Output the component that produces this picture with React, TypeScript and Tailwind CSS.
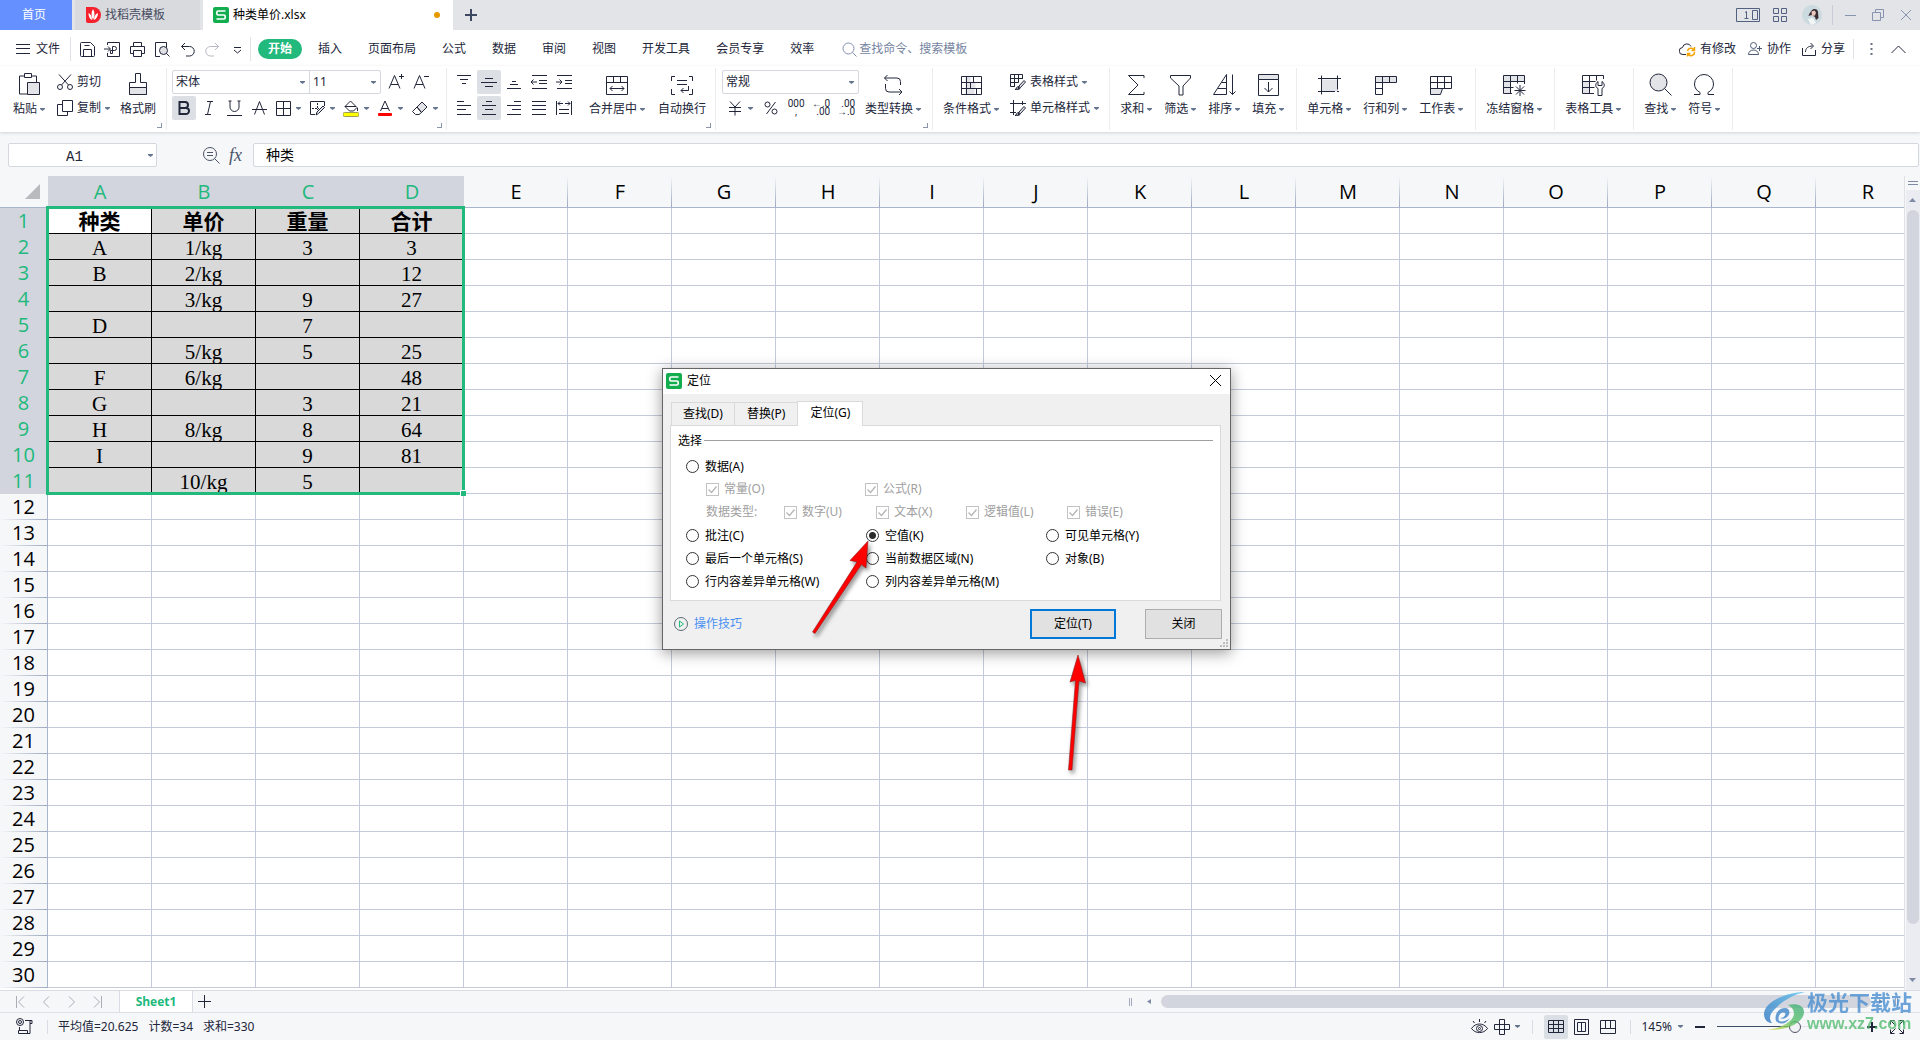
import React, { useState } from 'react'
import clsx from 'clsx'

type IconProps = {
  w?: number
  h?: number
  sw?: number
  className?: string
  children: React.ReactNode
}

function Icon({ w = 24, h = 24, sw = 1, className, children }: IconProps) {
  return (
    <svg width={w} height={h} viewBox={`0 0 ${w} ${h}`} fill="none" stroke="currentColor" strokeWidth={sw} className={clsx('shrink-0', className)} aria-hidden="true">
      {children}
    </svg>
  )
}

const Caret = ({ className }: { className?: string }) => (
  <svg width="5" height="3" viewBox="0 0 5 3" className={clsx('shrink-0 fill-[#66758f]', className)} aria-hidden="true">
    <path d="M0 0h5v1L2.5 3 0 1z" />
  </svg>
)

const WpsLogo = () => (
  <svg width="16" height="16" viewBox="0 0 16 16" className="shrink-0" aria-hidden="true">
    <rect width="16" height="16" rx="2" fill="#12ad4e" />
    <path d="M12.5 4H5.2a1.4 1.4 0 0 0-1.4 1.4v1.2A1.4 1.4 0 0 0 5.200 8h5.600a1.400 1.400 0 0 1 1.400 1.400v1.200a1.400 1.400 0 0 1-1.400 1.400H3.500" fill="none" stroke="#fff" strokeWidth="1.7" />
  </svg>
)

/* ---------- icons of the quick bar ---------- */

const quickIcons = [
  { name: '保存', d: <><path d="M1.500 2.500a1 1 0 0 1 1-1h9l4 4v9a1 1 0 0 1-1 1h-12a1 1 0 0 1-1-1z" /><path d="M4.500 15.500v-7h8v7M5.500 4.500h5" /></> },
  { name: '输出为PDF', d: <><path d="M3.500 4V1.500h12v14h-12V12M0 8h6M4 5.500 6.500 8 4 10.500M8.500 12.500v-7h2a2 2 0 0 1 0 4h-4M8.500 12.500H6.500v-3" /></> },
  { name: '打印', d: <><path d="M4.500 5.500v-4h8v4M4.500 12.500h-3v-7h14v7h-3" /><path d="M4.500 9.500h8v6h-8z" /></> },
  { name: '打印预览', d: <><path d="M6 15.500H1.500v-14h11v5" /><circle cx="9.500" cy="9.500" r="4" fill="#dfe1e5" /><path d="m12.500 12.500 3 3" /></> },
  { name: '撤消', d: <path d="M6 2 2.500 5.500 6 9M2.500 5.500h8a4.500 4.500 0 0 1 0 9.500H7" /> },
]

/* ---------- icons of the ribbon ---------- */

const icons = {
  paste: <Icon><path d="M7 4H2.500v18h8M15 4h4.500v6" /><path d="M7.500 1.500h7v4h-7z" /><path d="M10.500 10.500h12v12h-12z" fill="#e2e4e8" /></Icon>,
  brush: <Icon><path d="M9.500 1.500h5v9h6v12h-17v-12h6z" /><path d="M3.500 15.500h17v7h-17z" fill="#e2e4e8" /></Icon>,
  merge: <Icon><path d="M1.500 4.500h21v18h-21zM1.500 10.500h21M8.500 4.500v6M15.500 4.500v6M5 16.500h14M7.500 14 5 16.500 7.500 19M16.500 14l2.500 2.500-2.500 2.500" /></Icon>,
  wrap: <Icon><path d="M5 4.500H1.500V9M1.500 17v5.500H5M19 4.500h3.500V9M22.500 17v5.500H19M7 8.500h10M7 12.500h10M18.500 14v4.500H11M13.500 16 11 18.500l2.500 2.500" /></Icon>,
  convert: <Icon><path d="M6.500 3 3.500 6l3 3M3.500 6H16a3.500 3.500 0 0 1 3.500 3.500V13M4.500 12v4.500A3.500 3.500 0 0 0 8 20h13M18 17l3 3-3 3" /></Icon>,
  cond: <Icon><path d="M6.500 4.500h5v6h-5zM6.500 10.500h4v6h-4zM10.500 10.500h6v6h-6zM6.500 16.500h9v6h-9z" fill="#e2e4e8" stroke="none" /><path d="M2.500 4.500h20v18h-20zM2.500 10.500h20M2.500 16.500h20M7.500 4.500v18M14.500 4.500v6M11.500 10.500v6M17.500 16.500v6" /></Icon>,
  sum: <Icon><path d="M20 6V3.500H4.500l9.500 9.500-9.500 9.500H20V20" /></Icon>,
  filter: <Icon><path d="M2.500 3.500h20v2.500l-7.500 8v9h-4v-9l-8.500-8z" /></Icon>,
  sort: <Icon><path d="M1.500 22.500 14.500 2.500v20zM6 16.500h8.500M9.500 10.500h5M20.500 2.500v20M17.500 19.500l3 3 3-3" /></Icon>,
  fill: <Icon><path d="M2.500 2.500h20v5h-20z" fill="#e2e4e8" /><path d="M2.500 7.500v16h20v-16M12.500 10v10M8.500 16l4 4 4-4" /></Icon>,
  cells: <Icon><path d="M4.500 7.500h16v12h-16z" fill="#e2e4e8" stroke="none" /><path d="M4.500 3.500v19M20.500 3.500v14M1 6.500h23M1 19.500h17M20 19.500h2" /></Icon>,
  rowcol: <Icon><path d="M2.500 4.500h21v6h-21z" fill="#e2e4e8" /><path d="M9.500 4.500v18h-7v-18M16.500 4.500v6M2.500 10.500h7M2.500 16.500h7" /></Icon>,
  sheet: <Icon><path d="M1.500 16.500h12l-2 6h-10z" fill="#e2e4e8" /><path d="M1.500 4.500h21v12h-21zM1.500 10.500h21M8.500 4.500v12M15.500 4.500v12" /></Icon>,
  freeze: <Icon><path d="M1.500 3.500h21v6h-14v12h-7z" fill="#e2e4e8" stroke="none" /><path d="M10 21.500H1.500v-18h21v6h-21M1.500 15.500h10M8.500 3.500v18M15.500 3.500v8M22.500 9v3M18 13v11M12.500 18.500h11M14 14.500l8 8M22 14.500l-8 8" /></Icon>,
  tools: <Icon><path d="M1.500 9.500h7v12h-7z" fill="#e2e4e8" stroke="none" /><path d="M13 21.500H1.500v-18h21V7M1.500 9.500h13M1.500 15.500h12M8.500 3.500v18M15.500 3.500v5" /><path d="M17 9.500c-3 2-3 5.500 0 7V23.500h4v-7c3-1.500 3-5 0-7v4h-4z" fill="#fff" /></Icon>,
  find: <Icon><circle cx="10.500" cy="10.500" r="8.500" fill="#e2e4e8" /><path d="m16.500 16.500 7 7" /></Icon>,
  omega: <Icon><path d="M2 22.500h6v-2C4.500 18.500 2.500 16 2.500 12a9.500 9.500 0 0 1 19 0c0 4-2 6.500-5.500 8.500v2h6" /></Icon>,
}

const cutIcon = <Icon w={16} h={16}><path d="M2 .5 11.500 11M14 .5 4.500 11" /><circle cx="3" cy="13" r="2.500" /><circle cx="13" cy="13" r="2.500" /></Icon>
const copyIcon = <Icon w={16} h={16}><path d="M5 4.500H.5v11h10V12" /><path d="M5.500.5h10v11h-10z" /></Icon>
const penPath = <path d="m8 15 1-3 5-5.500 1.500 1.500-5 5.500z" fill="#e2e4e8" />
const tableStyleIcon = <Icon w={16} h={16}><path d="M5 12.500H.5v-12h12V5M.5 4.500h12M.5 8.500h8M4.500.5v12M8.500.5v8" />{penPath}<path d="M5 15.500c2 0 1-3 3.500-3 1 0 2 1 1.500 2-1 1-2.500 1-5 1z" /></Icon>
const cellStyleIcon = <Icon w={16} h={16}><path d="M3.500 0v15M0 3.500h16M12.500 1v4M0 12.500h6" />{penPath}<path d="M5 15.500c2 0 1-3 3.500-3 1 0 2 1 1.500 2-1 1-2.500 1-5 1z" /></Icon>

function BigButton({ icon, label, caret = true }: { icon: React.ReactNode; label: string; caret?: boolean }) {
  return (
    <button className="flex flex-col items-center gap-[5px] pt-0.5">
      {icon}
      <span className="flex h-4 items-center gap-[3px] whitespace-nowrap">
        {label}
        {caret && <Caret />}
      </span>
    </button>
  )
}

function SmallButton({ icon, label, caret = true }: { icon: React.ReactNode; label: string; caret?: boolean }) {
  return (
    <button className="flex h-6 items-center gap-1 whitespace-nowrap">
      {icon}
      <span className="flex items-center gap-1">
        {label}
        {caret && <Caret />}
      </span>
    </button>
  )
}

function ToolButton({ label, active, children }: { label: string; active?: boolean; children: React.ReactNode }) {
  return (
    <button aria-label={label} className={clsx('flex size-6 shrink-0 items-center justify-center rounded-xs', active && 'bg-[#dce0e5]')}>
      {children}
    </button>
  )
}

function SplitButton({ label, children }: { label: string; children: React.ReactNode }) {
  return (
    <button aria-label={label} className="flex h-6 w-[34px] shrink-0 items-center gap-[5px] pl-[3px]">
      {children}
      <Caret />
    </button>
  )
}

function Group({ className, corner, children }: { className?: string; corner?: boolean; children: React.ReactNode }) {
  return (
    <div className={clsx('relative flex h-[62px] shrink-0 items-start border-r border-[#ebecef] pt-0.5', className)}>
      {children}
      {corner && <span className="absolute right-1 bottom-0.5 size-[5px] border-r border-b border-[#8a94aa]" />}
    </div>
  )
}

function Picker({ label, options, className }: { label: string; options: string[]; className?: string }) {
  return (
    <span className={clsx('relative flex h-full items-center', className)}>
      <select aria-label={label} className="h-full w-full appearance-none bg-transparent pl-[3px] outline-none">
        {options.map((o) => <option key={o}>{o}</option>)}
      </select>
      <Caret className="pointer-events-none absolute right-1" />
    </span>
  )
}

/* ---------- title bar and menus ---------- */

function TitleBar() {
  return (
    <header className="flex h-[30px] shrink-0 items-stretch bg-[#e3e4e8]">
      <button className="w-[72px] bg-[#6590ff] pr-1 text-white">首页</button>
      <button className="ml-[3px] flex w-[125px] items-center gap-1 bg-[#d9dade] pl-[11px] text-[#474c5e]">
        <svg width="15" height="16" viewBox="0 0 15 16" aria-hidden="true">
          <path d="M0 0h7a8 8 0 0 1 0 16H2a2 2 0 0 1-2-2z" fill="#f5222d" />
          <path d="M7 2c2 3 2 7 0 11-2-4-2-8 0-11zM2.500 6c2 1 3.500 3.500 3.500 7-2.500-1-3.500-4-3.500-7zM12 6c-2.500 1-4 3.500-4 7 2.500-1 4-4 4-7z" fill="#fff" />
        </svg>
        找稻壳模板
      </button>
      <div className="ml-[3px] flex w-[250px] items-center gap-1 bg-white pr-[13px] pl-[10px] text-black">
        <WpsLogo />
        <span className="flex-1">种类单价.xlsx</span>
        <span className="size-1.5 rounded-full bg-[#e69a00]" />
      </div>
      <button aria-label="新建" className="ml-3 text-[#3d4760]">
        <Icon w={12} h={12} sw={2}><path d="M6 0v12M0 6h12" /></Icon>
      </button>
      <div className="ml-auto flex items-center text-[#52617f]">
        <button aria-label="窗口" className="mr-3">
          <Icon w={25} h={14}><path d="M.5.5h23v13H.5zM16.500 2.500h5v9h-5zM9 4.500l1.500-1v6.500M8.500 10.500h4" /></Icon>
        </button>
        <button aria-label="应用" className="mr-[15px]">
          <Icon w={14} h={14}><path d="M.5.5h5v5h-5zM8.500.5h5v5h-5zM.5 8.500h5v5h-5zM8.500 8.500h5v5h-5z" /></Icon>
        </button>
        <svg width="20" height="20" viewBox="0 0 20 20" className="mr-[10px]" role="img" aria-label="头像">
          <circle cx="10" cy="10" r="10" fill="#cbdadf" />
          <path d="M10 5c2-2 6-1 6 2l.5 6-2.500 2-1-3-3.500-2-3 1c1-3 1.500-3 3.500-6z" fill="#3b2c33" />
          <path d="M9.500 6.500l3-1 1.500 2-1 3-3 .5z" fill="#e9c9bd" />
          <path d="M6 14l5-1 3 5-5 2z" fill="#f3f6f7" />
        </svg>
        <span className="h-5 w-px bg-[#c8ccd4]" />
        <div className="flex items-center gap-4 pr-2 pl-3 text-[#8793b0]">
          <button aria-label="最小化"><Icon w={11} h={12}><path d="M0 6.500h11" /></Icon></button>
          <button aria-label="还原"><Icon w={12} h={12}><path d="M.5 3.500h8v8h-8zM3.500 3.500v-3h8v8h-3" /></Icon></button>
          <button aria-label="关闭窗口"><Icon w={12} h={12}><path d="m1 1 10 10M11 1 1 11" /></Icon></button>
        </div>
      </div>
    </header>
  )
}

const menus = ['插入', '页面布局', '公式', '数据', '审阅', '视图', '开发工具', '会员专享', '效率']

function MenuBar() {
  return (
    <nav className="flex h-9 shrink-0 items-center bg-white pt-0.5">
      <button className="flex items-center gap-1.5 pl-4">
        <Icon w={14} h={12}><path d="M0 1.500h14M0 5.500h14M0 10.500h14" /></Icon>
        文件
      </button>
      <span className="ml-2.5 h-6 w-px bg-[#dfe1e6]" />
      <div className="flex items-center gap-2 pl-2">
        {quickIcons.map((q) => (
          <button key={q.name} aria-label={q.name}><Icon w={17} h={17}>{q.d}</Icon></button>
        ))}
        <button aria-label="恢复" className="text-[#b6b9c1]">
          <Icon w={17} h={17}><path d="M11 2l3.500 3.500L11 9M14.500 5.500h-8a4.500 4.500 0 0 0 0 9.500H10" /></Icon>
        </button>
        <button aria-label="更多命令">
          <Icon w={17} h={17}><path d="M5 6.500h7M5 9l3.500 3L12 9" /></Icon>
        </button>
      </div>
      <span className="ml-1 h-6 w-px bg-[#dfe1e6]" />
      <button className="ml-[7px] h-5 w-11 rounded-full bg-[#21b97c] font-bold text-white">开始</button>
      <div className="ml-4 flex gap-[26px]">
        {menus.map((m) => <button key={m} className="whitespace-nowrap">{m}</button>)}
      </div>
      <label className="ml-7 flex items-center gap-0.5 text-[#8290ae]">
        <Icon w={15} h={15}><circle cx="6.500" cy="6.500" r="5.500" /><path d="m10.500 10.500 4 4" /></Icon>
        <input aria-label="搜索" placeholder="查找命令、搜索模板" className="w-28 bg-transparent outline-none placeholder:text-[#76849f]" />
      </label>
      <div className="ml-auto flex items-center">
        <button className="flex items-center gap-1">
          <Icon w={17} h={15}>
            <path d="M7 12.500H4a3.500 3.500 0 0 1-.5-7 4.500 4.500 0 0 1 8.500-1" />
            <g stroke="#f5a300" strokeWidth="1.500"><path d="M8.500 9a3.500 3.500 0 0 1 6.500-1M15.500 10a3.500 3.500 0 0 1-6.500 2M15.500 5v3.500H12.500M8.500 14.500V11.500h3" /></g>
          </Icon>
          有修改
        </button>
        <button className="ml-3 flex items-center gap-1 text-[#4d5a75]">
          <Icon w={15} h={14}><circle cx="5.500" cy="3.500" r="3" /><path d="M.5 12.500c0-6 10-6 10 0zM11.500 4v5M9 6.500h5" /></Icon>
          <span className="text-[#22263a]">协作</span>
        </button>
        <button className="ml-[11px] flex items-center gap-1">
          <Icon w={15} h={14}><path d="M.5 6v7.500h13V8M3.500 10c0-4 3-6 7-6M8.500 1l3 3-3 3" /></Icon>
          分享
        </button>
        <span className="ml-2 h-5 w-px bg-[#dfe1e6]" />
        <button aria-label="更多" className="ml-4">
          <svg width="3" height="12" viewBox="0 0 3 12" fill="#6b7182"><path d="M.5 0h2v2h-2zM.5 5h2v2h-2zM.5 10h2v2h-2z" /></svg>
        </button>
        <button aria-label="收起功能区" className="mr-3.5 ml-[18px]">
          <Icon w={15} h={9}><path d="m.5 8 7-7 7 7" /></Icon>
        </button>
      </div>
    </nav>
  )
}

/* ---------- ribbon ---------- */

const alignIcons = [
  { name: '顶端对齐', d: 'M1 1.500h14M4 5.500h8M6 9.500h4' },
  { name: '垂直居中', d: 'M4 4.500h8M0 8.500h16M4 12.500h8', active: true },
  { name: '底端对齐', d: 'M6 7.500h4M4 10.500h8M1 14.500h14' },
  { name: '减少缩进', d: 'M1 1.500h15M8 6.500h8M8 9.500h8M1 14.500h15M0 8h6M2.500 5.500 0 8l2.500 2.500' },
  { name: '增加缩进', d: 'M1 1.500h15M9 6.500h7M9 9.500h7M1 14.500h15M0 8h6M3.500 5.500 6 8l-2.500 2.500' },
  { name: '左对齐', d: 'M1 1.500h7M1 5.500h14M1 9.500h9M1 14.500h14' },
  { name: '水平居中', d: 'M5 1.500h6M1 5.500h14M4 9.500h8M1 14.500h14', active: true },
  { name: '右对齐', d: 'M8 1.500h7M1 5.500h14M6 9.500h9M1 14.500h14' },
  { name: '两端对齐', d: 'M1 1.500h14M1 5.500h14M1 9.500h14M1 14.500h14' },
  { name: '分散对齐', d: 'M.5 1v14M15.500 1v14M2 3.500h5M9 3.500h5M4 1.500l-2 2 2 2M12 1.500l2 2-2 2M3 9.500h10M3 13.500h10' },
]

const numText = 'font-[family-name:Roboto] text-[10px] leading-2'

function Ribbon() {
  return (
    <section className="z-10 flex h-[66px] shrink-0 items-start overflow-hidden bg-white pt-0.5 shadow-[0_1px_3px_rgba(0,0,0,0.15)]">
      <Group corner className="pr-[10px] pl-[13px]">
        <BigButton icon={icons.paste} label="粘贴" />
        <div className="ml-3 flex flex-col gap-0.5">
          <SmallButton icon={cutIcon} label="剪切" caret={false} />
          <SmallButton icon={copyIcon} label="复制" />
        </div>
        <div className="ml-2.5"><BigButton icon={icons.brush} label="格式刷" caret={false} /></div>
      </Group>

      <Group corner className="flex-col gap-0.5 pr-1 pl-[5px]">
        <div className="flex gap-px">
          <div className="mr-0.5 flex h-6 w-[209px] rounded-xs border border-[#d5d7de]">
            <Picker label="字体" options={['宋体', '黑体']} className="flex-1 border-r border-[#d5d7de]" />
            <Picker label="字号" options={['11', '12', '14']} className="w-[70px]" />
          </div>
          <ToolButton label="增大字号"><Icon w={18} h={18}><path d="M2 15.500 7.500 2.500 13 15.500M4 11.500h7M14.500 1v5M12 3.500h5" /></Icon></ToolButton>
          <ToolButton label="减小字号"><Icon w={18} h={18}><path d="M2 15.500 7.500 2.500 13 15.500M4 11.500h7M12 3.500h5" /></Icon></ToolButton>
        </div>
        <div className="flex gap-px">
          <ToolButton label="加粗" active><Icon w={14} h={14} sw={2}><path d="M2.500 1h5.500a2.500 2.500 0 0 1 0 6H2.500zM2.500 7H9a2.700 2.700 0 0 1 0 6H2.500z" /></Icon></ToolButton>
          <ToolButton label="倾斜"><Icon w={14} h={14}><path d="M5 .5h6M3 13.500h6M8.500.5 5.500 13.500" /></Icon></ToolButton>
          <ToolButton label="下划线"><Icon w={15} h={16}><path d="M3 1v6a4.500 4.500 0 0 0 9 0V1M0 15.500h15M1.500 1h3M10.500 1h3" /></Icon></ToolButton>
          <ToolButton label="删除线"><Icon w={15} h={16}><path d="M2.500 14.500 7.500 1.500 12.500 14.500M0 9.500h15" /></Icon></ToolButton>
          <div className="flex">
            <SplitButton label="边框"><Icon w={16} h={16}><path d="M1.500 1.500h14v14h-14zM8.500 1.500v14M1.500 8.500h14" /></Icon></SplitButton>
            <SplitButton label="绘图边框"><Icon w={16} h={16}><path d="M6 14.500H1.500v-13h14V6" /><path d="M3 8.500h7M8.500 3v7" strokeDasharray="2 1" /><path d="m7 15 1-3 6-6 1.500 1.500-6 6z" fill="#e2e4e8" /></Icon></SplitButton>
            <SplitButton label="填充颜色"><Icon w={16} h={17}><path d="M7.500 1 2 6.500 6.500 11h4L14 7.500zM2 6.500h11M14.500 8v3" /><rect x="0" y="12.500" width="16" height="4" rx="1.500" fill="#ffff00" stroke="#9b9b5a" /></Icon></SplitButton>
            <SplitButton label="字体颜色"><Icon w={16} h={17}><path d="M3.500 11 8 1l4.500 10M5 8.500h6" /><rect x="1" y="13" width="14" height="3" rx="1" fill="#ff0000" stroke="none" /></Icon></SplitButton>
            <SplitButton label="清除"><Icon w={17} h={16}><path d="M6 7 11 2l5 5-5.500 5.500z" fill="#e2e4e8" /><path d="M6 7 1.500 11.500l3 3h3.500l2.500-2z" /></Icon></SplitButton>
          </div>
        </div>
      </Group>

      <Group corner className="gap-[13px] pr-[9px] pl-[5px]">
        <div className="grid grid-cols-5 gap-x-px gap-y-0.5">
          {alignIcons.map((a) => (
            <ToolButton key={a.name} label={a.name} active={a.active}>
              <Icon w={16} h={16}><path d={a.d} /></Icon>
            </ToolButton>
          ))}
        </div>
        <BigButton icon={icons.merge} label="合并居中" />
        <BigButton icon={icons.wrap} label="自动换行" caret={false} />
      </Group>

      <Group corner className="gap-1.5 pr-[11px] pl-1.5">
        <div className="flex flex-col gap-0.5">
          <div className="flex h-6 w-[137px] rounded-xs border border-[#d5d7de]">
            <Picker label="数字格式" options={['常规', '数值', '货币']} className="flex-1" />
          </div>
          <div className="flex gap-px pl-0.5">
            <SplitButton label="货币"><Icon w={16} h={16}><path d="M3 1.500 8 7l5-5.500M8 7v8.500M2 7.500h12M2 11.500h12" /></Icon></SplitButton>
            <ToolButton label="百分比"><Icon w={14} h={14}><circle cx="3.500" cy="3.500" r="2.500" /><circle cx="10.500" cy="10.500" r="2.500" /><path d="M11.500 1l-9 12" /></Icon></ToolButton>
            <ToolButton label="千位分隔"><span className={clsx('flex flex-col items-center', numText)}><span>000</span><span>,</span></span></ToolButton>
            <ToolButton label="增加小数位"><span className={clsx('flex flex-col items-end', numText)}><span>←.0</span><span>.00</span></span></ToolButton>
            <ToolButton label="减少小数位"><span className={clsx('flex flex-col items-end', numText)}><span>.00</span><span>→.0</span></span></ToolButton>
          </div>
        </div>
        <BigButton icon={icons.convert} label="类型转换" />
      </Group>

      <Group className="gap-[11px] px-[10px]">
        <BigButton icon={icons.cond} label="条件格式" />
        <div className="flex flex-col gap-0.5">
          <SmallButton icon={tableStyleIcon} label="表格样式" />
          <SmallButton icon={cellStyleIcon} label="单元格样式" />
        </div>
      </Group>

      <Group className="gap-3 pr-3 pl-[10px]">
        <BigButton icon={icons.sum} label="求和" />
        <BigButton icon={icons.filter} label="筛选" />
        <BigButton icon={icons.sort} label="排序" />
        <BigButton icon={icons.fill} label="填充" />
      </Group>

      <Group className="gap-3 pr-3 pl-[10px]">
        <BigButton icon={icons.cells} label="单元格" />
        <BigButton icon={icons.rowcol} label="行和列" />
        <BigButton icon={icons.sheet} label="工作表" />
      </Group>

      <Group className="pr-3 pl-[10px]"><BigButton icon={icons.freeze} label="冻结窗格" /></Group>
      <Group className="pr-3 pl-[10px]"><BigButton icon={icons.tools} label="表格工具" /></Group>
      <Group className="gap-3 pr-3 pl-[10px]">
        <BigButton icon={icons.find} label="查找" />
        <BigButton icon={icons.omega} label="符号" />
      </Group>
    </section>
  )
}

function FormulaBar() {
  return (
    <div className="flex h-11 shrink-0 items-center pt-0.5 pl-2">
      <div className="relative flex h-6 w-[149px] items-center rounded-xs border border-[#d5d7de] bg-white">
        <input aria-label="名称框" defaultValue="A1" className="w-full bg-transparent pt-[3px] pr-4 text-center font-[family-name:'Liberation_Mono',monospace] text-sm outline-none" />
        <Caret className="absolute right-[3px]" />
      </div>
      <button aria-label="搜索公式" className="ml-[46px] text-[#4a5468]">
        <Icon w={17} h={17}><circle cx="7" cy="7" r="6.500" /><path d="m11.500 11.500 5 5M4 5.500h6M4 8.500h6" /></Icon>
      </button>
      <button aria-label="插入函数" className="ml-[9px] w-4 text-left font-[family-name:'Liberation_Serif',serif] text-lg italic text-[#4a5468]">fx</button>
      <input aria-label="编辑栏" defaultValue="种类" className="mr-px ml-2 h-6 flex-1 rounded-xs border border-[#d5d7de] bg-white pb-0.5 pl-3 text-sm text-black outline-none" />
    </div>
  )
}

/* ---------- sheet ---------- */

const columns = 'ABCDEFGHIJKLMNOPQR'.split('')

const data = [
  ['种类', '单价', '重量', '合计'],
  ['A', '1/kg', '3', '3'],
  ['B', '2/kg', '', '12'],
  ['', '3/kg', '9', '27'],
  ['D', '', '7', ''],
  ['', '5/kg', '5', '25'],
  ['F', '6/kg', '', '48'],
  ['G', '', '3', '21'],
  ['H', '8/kg', '8', '64'],
  ['I', '', '9', '81'],
  ['', '10/kg', '5', ''],
]

function Sheet() {
  return (
    <div className="relative min-w-0 flex-1 overflow-hidden bg-white">
      <table className="border-separate border-spacing-0 font-[family-name:'Open_Sans',sans-serif] text-xl text-black">
        <thead>
          <tr className="h-8">
            <th className="w-12 min-w-12 border-b border-[#a9b5cc] bg-[#f6f7f9] p-0 align-bottom">
              <svg width="15" height="15" viewBox="0 0 15 15" className="mb-2 ml-[25px]" fill="#b9babd" aria-hidden="true"><path d="M15 0v15H0z" /></svg>
            </th>
            {columns.map((c, i) => (
              <th
                key={c}
                className={clsx(
                  'w-[104px] min-w-[104px] border-b border-[#a9b5cc] bg-right bg-no-repeat bg-[length:1px_100%] p-0 font-normal',
                  i < 4 ? 'bg-[#d2d5dd] text-[#21b97c]' : 'bg-[#f6f7f9] bg-[linear-gradient(to_bottom,transparent,#9ba8bf)]'
                )}
              >
                {c}
              </th>
            ))}
          </tr>
        </thead>
        <tbody>
          {Array.from({ length: 30 }, (_, r) => (
            <tr key={r} className="h-[26px]">
              <th
                className={clsx(
                  'border-r border-[#a9b5cc] bg-bottom bg-no-repeat bg-[length:100%_1px] p-0 font-normal',
                  r < 11 ? 'bg-[#d2d5dd] text-[#21b97c]' : 'bg-[#f6f7f9] bg-[linear-gradient(to_right,transparent,#9ba8bf)]'
                )}
              >
                <div className="h-[25px] leading-[24px]">{r + 1}</div>
              </th>
              {columns.map((c, i) => {
                const inData = r < 11 && i < 4
                return (
                  <td
                    key={c}
                    className={clsx(
                      'border-r border-b p-0 text-center',
                      inData ? 'border-black' : 'border-[#c5cadb]',
                      inData && !(r === 0 && i === 0) && 'bg-[#d9d9d9]'
                    )}
                  >
                    {inData && (
                      <div
                        className={clsx(
                          "h-[25px] font-[family-name:'Liberation_Serif','Noto_Sans_CJK_SC',serif] text-[21px] leading-[28px]",
                          r === 0 && 'font-bold'
                        )}
                      >
                        {data[r][i]}
                      </div>
                    )}
                  </td>
                )
              })}
            </tr>
          ))}
        </tbody>
      </table>
      {/* selection frame over A1:D11 */}
      <div className="pointer-events-none absolute top-[30px] left-[46px] h-[289px] w-[419px] border-3 border-[#21b97c]">
        <span className="absolute -right-1 -bottom-1 size-1.5 border-t border-l border-white bg-[#21b97c]" />
      </div>
    </div>
  )
}

function VerticalScroll() {
  return (
    <div className="flex w-4 shrink-0 flex-col items-center border-l border-[#dfe1e7] bg-[#f6f7f9] text-[#7f8ba5]">
      <Icon w={10} h={14}><path d="M0 5.500h10M0 8.500h10" /></Icon>
      <div className="flex w-[14px] flex-1 flex-col items-center bg-[#ebecf1] pt-2">
        <svg width="7" height="4" viewBox="0 0 7 4" fill="#7f8ba5" aria-hidden="true"><path d="M3.500 0 7 4H0z" /></svg>
        <div className="mt-2 flex w-3 flex-1 flex-col">
          <div className="h-[93%] rounded-full bg-[#d2d5dd]" />
        </div>
        <svg width="7" height="4" viewBox="0 0 7 4" fill="#7f8ba5" className="mb-2" aria-hidden="true"><path d="M0 0h7L3.500 4z" /></svg>
      </div>
    </div>
  )
}

/* ---------- find dialog ---------- */

function Radio({ label, picked, onPick }: { label: string; picked: string; onPick: (v: string) => void }) {
  return (
    <label className="flex items-center gap-1.5 whitespace-nowrap">
      <input
        type="radio"
        name="target"
        checked={picked === label}
        onChange={() => onPick(label)}
        className="size-[13px] appearance-none rounded-full border border-[#333] bg-white checked:bg-[radial-gradient(circle,#2b2b2b_3px,#fff_4px)]"
      />
      {label}
    </label>
  )
}

function Tick({ label, className }: { label: string; className?: string }) {
  return (
    <label className={clsx('relative flex items-center gap-[5px] whitespace-nowrap text-[#a0a0a0]', className)}>
      <input type="checkbox" defaultChecked disabled className="size-[13px] appearance-none border border-[#c3c3c3] bg-white" />
      <Icon w={13} h={13} className="pointer-events-none absolute left-0 text-[#b5b5b5]"><path d="m2.500 6.500 3 3 5-6" strokeWidth="1.300" /></Icon>
      {label}
    </label>
  )
}

function LocateDialog() {
  const [picked, setPicked] = useState('空值(K)')
  const radioRows = [
    ['批注(C)', '空值(K)', '可见单元格(Y)'],
    ['最后一个单元格(S)', '当前数据区域(N)', '对象(B)'],
    ['行内容差异单元格(W)', '列内容差异单元格(M)'],
  ]

  return (
    <div role="dialog" aria-label="定位" className="absolute top-[368px] left-[662px] z-20 w-[569px] border border-[#666] bg-[#f0f0f0] text-black shadow-[0_3px_14px_rgba(0,0,0,0.4)]">
      <div className="flex h-[25px] items-center gap-[5px] bg-white pr-2 pb-0.5 pl-[3px]">
        <WpsLogo />
        <span className="flex-1">定位</span>
        <button aria-label="关闭对话框"><Icon w={13} h={13}><path d="m1 1 11 11M12 1 1 12" /></Icon></button>
      </div>
      <div className="pt-[7px] pr-[9px] pl-[7px]">
        <div className="flex items-end pl-px" role="tablist">
          <button role="tab" className="h-[23px] border border-b-0 border-[#d9d9d9] px-[11px]">查找(D)</button>
          <button role="tab" className="h-[23px] border-t border-[#d9d9d9] px-3">替换(P)</button>
          <button role="tab" aria-selected="true" className="relative -mb-px h-[25px] border border-b-0 border-[#d9d9d9] bg-white px-3 pb-0.5">定位(G)</button>
        </div>
        <div className="border border-[#d9d9d9] bg-white pb-[7px]">
          <div className="flex h-[29px] items-center gap-0.5 pr-[7px] pl-[7px]">
            选择
            <span className="h-px flex-1 bg-[#a0a0a0]" />
          </div>
          <div className="flex h-[23px] items-center pl-[15px]">
            <Radio label="数据(A)" picked={picked} onPick={setPicked} />
          </div>
          <div className="flex h-[22px] items-center pl-[35px]">
            <Tick label="常量(O)" className="w-[159px]" />
            <Tick label="公式(R)" />
          </div>
          <div className="flex h-6 items-center pl-[35px]">
            <span className="w-[78px] text-[#a0a0a0]">数据类型:</span>
            <Tick label="数字(U)" className="w-[92px]" />
            <Tick label="文本(X)" className="w-[90px]" />
            <Tick label="逻辑值(L)" className="w-[101px]" />
            <Tick label="错误(E)" />
          </div>
          {radioRows.map((row) => (
            <div key={row[0]} className="grid h-[23px] grid-cols-[180px_180px_1fr] items-center pl-[15px]">
              {row.map((label) => <Radio key={label} label={label} picked={picked} onPick={setPicked} />)}
            </div>
          ))}
        </div>
      </div>
      <div className="relative flex items-center pt-2 pr-2 pb-2.5 pl-[11px]">
        <a href="#tips" className="flex flex-1 items-center gap-1.5 text-[#4a90f2]">
          <Icon w={14} h={14}><circle cx="7" cy="7" r="6.500" stroke="#5c6b73" /><path d="M5.500 4v6l4-3z" stroke="#21b97c" /></Icon>
          操作技巧
        </a>
        <button className="h-[30px] w-[86px] border-2 border-[#0078d7] bg-[#e1e1e1]">定位(T)</button>
        <button className="ml-[29px] h-[30px] w-[77px] border border-[#adadad] bg-[#e1e1e1]">关闭</button>
        <svg width="8" height="8" viewBox="0 0 8 8" className="absolute right-0.5 bottom-0.5" fill="#bdbdbd" aria-hidden="true">
          <path d="M6 0h2v2H6zM3 3h2v2H3zM6 3h2v2H6zM0 6h2v2H0zM3 6h2v2H3zM6 6h2v2H6z" />
        </svg>
      </div>
    </div>
  )
}

function Arrows() {
  return (
    <svg width="290" height="250" viewBox="0 0 290 250" className="pointer-events-none absolute top-[530px] left-[805px] z-30 drop-shadow-[2px_3px_2px_rgba(0,0,0,0.45)]" aria-hidden="true">
      <g fill="#fe0000" stroke="#8f2020" strokeWidth="0.600">
        <path d="M63 11 45 30.500 52 32 7.500 102l2.500 1.500L56.500 34.500 61 38z" />
        <path d="M273 125l-8 27 5.500-1.500L263.500 240h3.500l7-89 6.500 2z" />
      </g>
    </svg>
  )
}

/* ---------- bottom bars ---------- */

function SheetTabs() {
  return (
    <div className="flex h-[22px] shrink-0 items-center border-t border-[#d9dce3] bg-[#f6f7f9]">
      <div className="flex w-[119px] shrink-0 items-center gap-4 pl-[15px] text-[#a9adb8]">
        <button aria-label="第一张"><Icon w={10} h={12}><path d="M1.500 0v12M9 .5 3.500 6 9 11.500" /></Icon></button>
        <button aria-label="上一张"><Icon w={10} h={12}><path d="M8 .5 2.500 6 8 11.500" /></Icon></button>
        <button aria-label="下一张"><Icon w={10} h={12}><path d="M2 .5 7.500 6 2 11.500" /></Icon></button>
        <button aria-label="最后一张"><Icon w={10} h={12}><path d="M8.500 0v12M1 .5 6.500 6 1 11.500" /></Icon></button>
      </div>
      <button className="h-full w-[74px] border-x border-[#d9dce3] bg-white font-[family-name:'Open_Sans',sans-serif] font-bold text-[#21b97c]">Sheet1</button>
      <button aria-label="新建工作表" className="ml-[5px]"><Icon w={13} h={13}><path d="M6.500 0v13M0 6.500h13" /></Icon></button>
      <div className="ml-auto flex w-[41.2%] items-center">
        <span className="h-2 w-[3px] border-x border-[#a3aabb]" />
        <svg width="4" height="5" viewBox="0 0 4 5" className="ml-[15px]" fill="#7f8ba5" aria-hidden="true"><path d="M4 0v5L0 2.500z" /></svg>
        <span className="mr-2 ml-2.5 h-[13px] flex-1 rounded-full bg-[#d2d5dd]" />
        <svg width="4" height="5" viewBox="0 0 4 5" fill="#7f8ba5" aria-hidden="true"><path d="M0 0v5l4-2.500z" /></svg>
        <span className="mr-[22px] ml-3 h-2 w-[3px] border-x border-[#a3aabb]" />
      </div>
    </div>
  )
}

function StatusBar() {
  return (
    <footer className="flex h-7 shrink-0 items-center border-t border-[#dfe1e7] bg-[#f6f7f9]">
      <Icon w={17} h={17} className="ml-4"><circle cx="4" cy="4" r="3.500" /><circle cx="4" cy="4" r="1.500" /><path d="M9 2.500h7v3h-2M14 2.500v13H2.500v-3h9v3M3.500 12V9" /></Icon>
      <span className="ml-3.5 h-3.5 w-px bg-[#d9dce3]" />
      <div className="ml-2.5 flex gap-2.5 whitespace-nowrap">
        <span>平均值=20.625</span>
        <span>计数=34</span>
        <span>求和=330</span>
      </div>
      <div className="mr-4 ml-auto flex items-center">
        <button aria-label="护眼模式"><Icon w={17} h={17}><path d="M.5 10.500c4-6 12-6 16 0-4 5.500-12 5.500-16 0zM8.500 1v3M2 3l1.500 2M15 3l-1.500 2" /><circle cx="8.500" cy="10.500" r="3" /><circle cx="8.500" cy="10.500" r="1" /></Icon></button>
        <button aria-label="阅读模式" className="ml-1.5 flex items-center gap-1"><Icon w={17} h={16}><path d="M5.500.5h5v15h-5zM.5 5.500h15v5H.5z" /></Icon><Caret /></button>
        <span className="mr-[11px] ml-3 h-3.5 w-px bg-[#d9dce3]" />
        <button aria-label="普通视图" className="flex size-6 items-center justify-center rounded-xs bg-[#dadfe6]"><Icon w={16} h={13}><path d="M.5.5h15v12H.5zM.5 4.500h15M.5 8.500h15M5.500.5v12M10.500.5v12" /></Icon></button>
        <button aria-label="分页预览" className="ml-1.5"><Icon w={16} h={16}><path d="M.5.5h14v15H.5zM3.500 3.500h4v9h-4zM7.500 3.500h4v9h-4z" /></Icon></button>
        <button aria-label="页面布局视图" className="ml-2.5"><Icon w={16} h={14}><path d="M.5.5h15v13H.5zM.5 8.500h10M5.500.5v8M10.500.5v8h5" /></Icon></button>
        <span className="ml-3.5 h-3.5 w-px bg-[#d9dce3]" />
        <button className="ml-[10px] flex items-center gap-1.5">145%<Caret /></button>
        <button aria-label="缩小" className="ml-3"><Icon w={10} h={12} sw={2}><path d="M0 6h10" /></Icon></button>
        <input
          type="range"
          aria-label="显示比例"
          defaultValue={54}
          className="ml-3 h-3 w-[146px] appearance-none bg-[linear-gradient(to_right,#3c4a66_50%,#dfe2e8_50%)] bg-[length:100%_1px] bg-center bg-no-repeat [&::-webkit-slider-thumb]:size-3 [&::-webkit-slider-thumb]:appearance-none [&::-webkit-slider-thumb]:rounded-full [&::-webkit-slider-thumb]:border [&::-webkit-slider-thumb]:border-[#4d5567] [&::-webkit-slider-thumb]:bg-[#f3f3f5]"
        />
        <button aria-label="放大" className="ml-1"><Icon w={10} h={12} sw={2}><path d="M0 6h10M5 1v10" /></Icon></button>
        <button aria-label="全屏" className="ml-[13px]"><Icon w={14} h={14}><path d="M.5 4.500v-4h4M9.500.5h4v4M13.500 9.500v4h-4M4.500 13.500h-4v-4M.5.5l5 5M13.500.5l-5 5M13.500 13.500l-5-5M.5 13.500l5-5" /></Icon></button>
      </div>
    </footer>
  )
}

function Watermark() {
  return (
    <div className="pointer-events-none absolute right-2 bottom-1.5 z-30 flex items-center gap-0.5 opacity-80">
      <svg width="42" height="42" viewBox="0 0 42 42" aria-hidden="true">
        <defs>
          <linearGradient id="aurora" x1="0" y1="1" x2="1" y2="0">
            <stop offset="0" stopColor="#2f74c0" />
            <stop offset="1" stopColor="#5cc4f0" />
          </linearGradient>
          <linearGradient id="leaf" x1="0" y1="1" x2="1" y2="0">
            <stop offset="0" stopColor="#e6e04a" />
            <stop offset="0.500" stopColor="#5cc26a" />
            <stop offset="1" stopColor="#3fae7c" />
          </linearGradient>
        </defs>
        <path d="M42 1C22 1 0 12 1 24c.5 5 4 8 8 8-4-5-2-10 5-16C21 9 32 3 42 1z" fill="url(#aurora)" />
        <path d="M25 14c8-2 16 0 16 7 0 9-14 19-37 18 14-2 26-8 27-16 0-4-2-7-6-9z" fill="url(#leaf)" />
        <path d="M13 30c-2-6 2-13 9-13 5 0 6 6 2 9-2 2-5 2-7 1 4 0 6-3 5-5-3-2-8 2-6 8 3 1 8 0 11-3-3 5-9 8-14 3z" fill="#3f86c9" />
      </svg>
      <div className="flex flex-col">
        <span className="text-[21px] leading-6 font-bold text-[#4a8fd2]">极光下载站</span>
        <span className="font-[family-name:'Liberation_Sans',sans-serif] text-base leading-5 font-bold text-[#57bd72]">www.xz7.com</span>
      </div>
    </div>
  )
}

export default function App() {
  return (
    <div className="relative flex h-screen flex-col overflow-hidden bg-[#f6f7f9] font-[family-name:'Noto_Sans','Noto_Sans_CJK_SC',sans-serif] text-xs text-[#22263a]">
      <TitleBar />
      <MenuBar />
      <Ribbon />
      <FormulaBar />
      <main className="flex min-h-0 flex-1">
        <Sheet />
        <VerticalScroll />
      </main>
      <SheetTabs />
      <StatusBar />
      <LocateDialog />
      <Arrows />
      <Watermark />
    </div>
  )
}
